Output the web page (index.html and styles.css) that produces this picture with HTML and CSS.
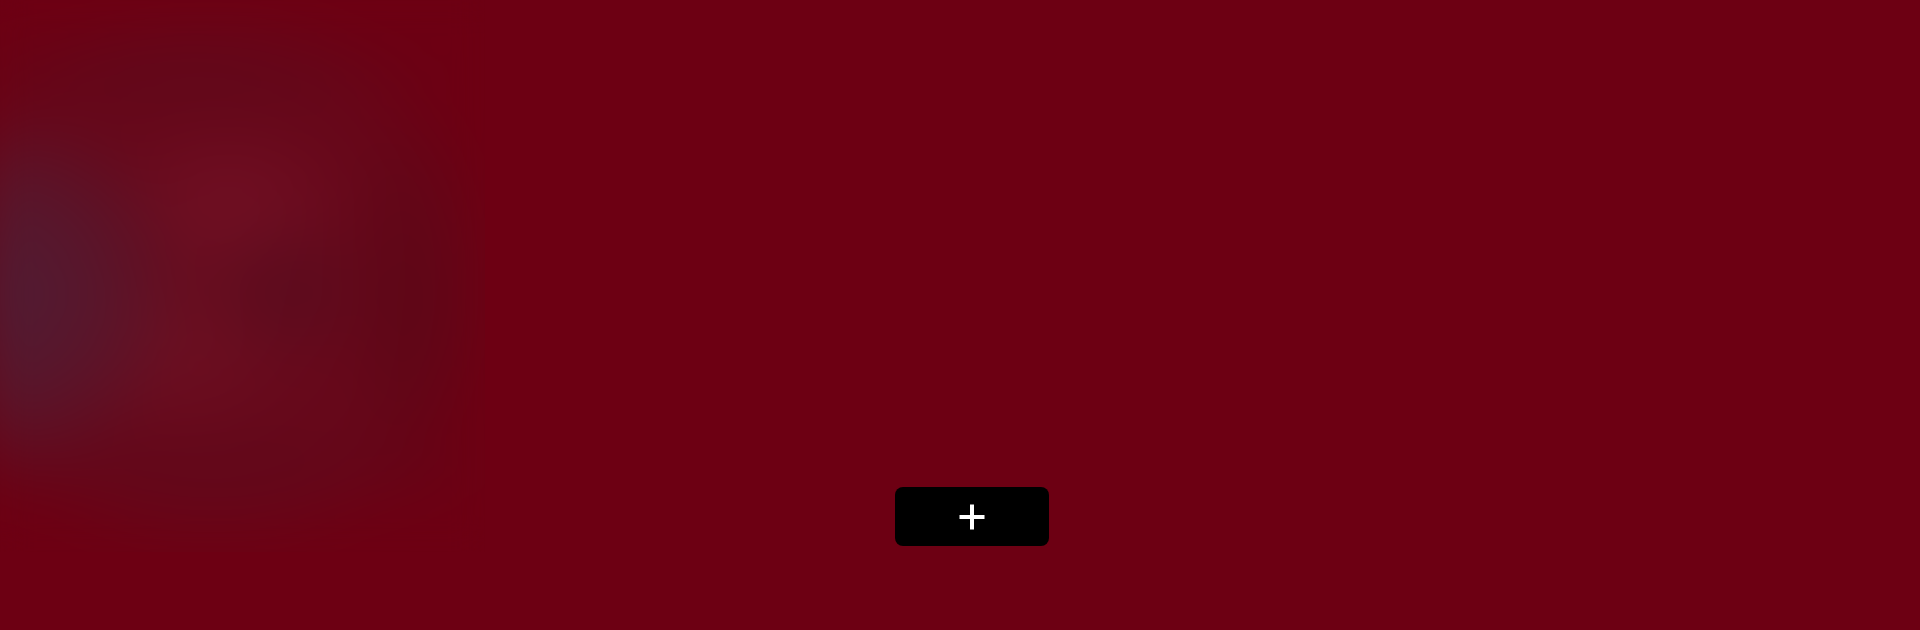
FILE: index.html
```html
<!DOCTYPE html>
<html lang="en">
<head>
<meta charset="utf-8">
<title>Player</title>
<link rel="stylesheet" href="styles.css">
</head>
<body>
<div class="page">
  <div class="art" aria-hidden="true">
    <div class="art-blur"></div>
  </div>
  <div class="controls">
    <button class="add-btn" type="button" aria-label="Add">
      <svg width="28" height="28" viewBox="0 0 28 28"><path d="M14 1.5v25M1.5 14h25" stroke="#fff" stroke-width="4" fill="none"/></svg>
    </button>
  </div>
</div>
</body>
</html>
```
FILE: styles.css
```css
html, body {
  margin: 0;
  padding: 0;
  height: 100%;
  background: #6d0013;
  font-family: "Liberation Sans", Arial, sans-serif;
  overflow: hidden;
}
.page {
  display: flex;
  height: 630px;
}
.art {
  width: 485px;
  height: 552px;
  flex: none;
  overflow: hidden;
  position: relative;
}
.art-blur {
  position: absolute;
  inset: -20px;
  background:
    radial-gradient(ellipse 190px 200px at 20px 314px, rgba(80,28,52,1) 0%, rgba(86,24,46,0.85) 50%, rgba(90,18,40,0) 100%),
    radial-gradient(ellipse 90px 80px at 310px 310px, rgba(90,12,30,0.9) 0%, rgba(90,12,30,0) 100%),
    radial-gradient(ellipse 130px 90px at 250px 225px, rgba(114,16,36,0.9) 0%, rgba(114,16,36,0) 100%),
    radial-gradient(ellipse 130px 100px at 200px 370px, rgba(110,16,34,0.8) 0%, rgba(110,16,34,0) 100%),
    radial-gradient(ellipse 80px 220px at 430px 320px, rgba(92,6,22,0.9) 0%, rgba(92,6,22,0) 100%),
    radial-gradient(ellipse 300px 55px at 190px 95px, rgba(96,8,26,0.85) 0%, rgba(96,8,26,0) 100%),
    radial-gradient(ellipse 300px 60px at 240px 490px, rgba(96,8,26,0.8) 0%, rgba(96,8,26,0) 100%),
    radial-gradient(ellipse 290px 290px at 230px 300px, rgba(100,12,30,1) 0%, rgba(100,12,30,0.6) 72%, rgba(109,0,19,0) 100%),
    #6d0013;
  filter: blur(24px);
}
.controls {
  flex: 1;
  padding-top: 487px;
  padding-left: 410px;
}
.add-btn {
  width: 154px;
  height: 59px;
  border: none;
  border-radius: 8px;
  background: #000;
  display: flex;
  align-items: center;
  justify-content: center;
  padding: 0;
  cursor: pointer;
}
.add-btn svg {
  display: block;
}
```
